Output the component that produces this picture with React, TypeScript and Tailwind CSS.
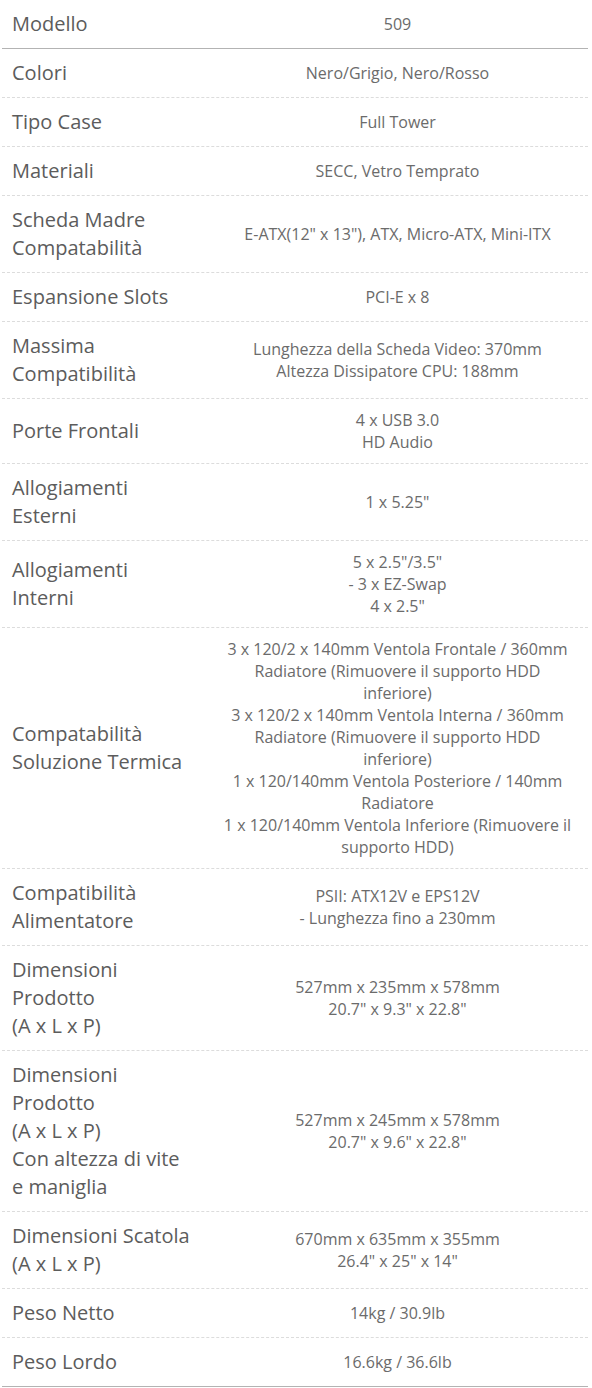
type Spec = { label: string[]; value: string[] };

const specs: Spec[] = [
  { label: ["Modello"], value: ["509"] },
  { label: ["Colori"], value: ["Nero/Grigio, Nero/Rosso"] },
  { label: ["Tipo Case"], value: ["Full Tower"] },
  { label: ["Materiali"], value: ["SECC, Vetro Temprato"] },
  { label: ["Scheda Madre", "Compatabilità"], value: ['E-ATX(12" x 13"), ATX, Micro-ATX, Mini-ITX'] },
  { label: ["Espansione Slots"], value: ["PCI-E x 8"] },
  {
    label: ["Massima", "Compatibilità"],
    value: ["Lunghezza della Scheda Video: 370mm", "Altezza Dissipatore CPU: 188mm"],
  },
  { label: ["Porte Frontali"], value: ["4 x USB 3.0", "HD Audio"] },
  { label: ["Allogiamenti", "Esterni"], value: ['1 x 5.25"'] },
  { label: ["Allogiamenti", "Interni"], value: ['5 x 2.5"/3.5"', "- 3 x EZ-Swap", '4 x 2.5"'] },
  {
    label: ["Compatabilità", "Soluzione Termica"],
    value: [
      "3 x 120/2 x 140mm Ventola Frontale / 360mm",
      "Radiatore (Rimuovere il supporto HDD",
      "inferiore)",
      "3 x 120/2 x 140mm Ventola Interna / 360mm",
      "Radiatore (Rimuovere il supporto HDD",
      "inferiore)",
      "1 x 120/140mm Ventola Posteriore / 140mm",
      "Radiatore",
      "1 x 120/140mm Ventola Inferiore (Rimuovere il",
      "supporto HDD)",
    ],
  },
  { label: ["Compatibilità", "Alimentatore"], value: ["PSII: ATX12V e EPS12V", "- Lunghezza fino a 230mm"] },
  {
    label: ["Dimensioni", "Prodotto", "(A x L x P)"],
    value: ["527mm x 235mm x 578mm", '20.7" x 9.3" x 22.8"'],
  },
  {
    label: ["Dimensioni", "Prodotto", "(A x L x P)", "Con altezza di vite", "e maniglia"],
    value: ["527mm x 245mm x 578mm", '20.7" x 9.6" x 22.8"'],
  },
  {
    label: ["Dimensioni Scatola", "(A x L x P)"],
    value: ["670mm x 635mm x 355mm", '26.4" x 25" x 14"'],
  },
  { label: ["Peso Netto"], value: ["14kg / 30.9lb"] },
  { label: ["Peso Lordo"], value: ["16.6kg / 36.6lb"] },
];

export default function App() {
  return (
    <div className="bg-white min-h-screen font-['Open_Sans',sans-serif]">
      <div className="ml-[2px] w-[586px]">
        {specs.map((row, i) => {
          // first and last rows get the solid rule, the rest are dashed
          const solid = i === 0 || i === specs.length - 1;
          return (
            <div
              key={i}
              className={
                "flex items-center border-b " +
                (solid ? "border-solid border-[#b3b3b3]" : "border-dashed border-[#dcdcdc]")
              }
            >
              <div className="w-[205px] shrink-0 py-[10px] pl-[10px] text-[20px] leading-[28px] text-[#5c5c5c]">
                {row.label.map((l, j) => (
                  <div key={j} className="whitespace-nowrap">
                    {l}
                  </div>
                ))}
              </div>
              <div className="flex-1 py-[10px] text-center text-[16px] leading-[22px] text-[#6b6b6b]">
                {row.value.map((v, j) => (
                  <div key={j} className="whitespace-nowrap">
                    {v}
                  </div>
                ))}
              </div>
            </div>
          );
        })}
      </div>
    </div>
  );
}
